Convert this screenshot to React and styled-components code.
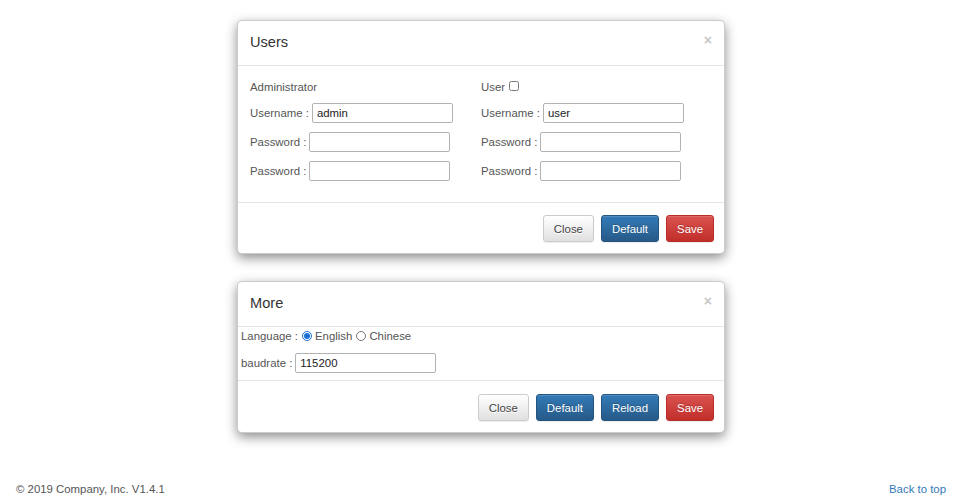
import styled, { createGlobalStyle, css } from 'styled-components';

const GlobalStyle = createGlobalStyle`
  html, body {
    margin: 0;
    padding: 0;
    background: #fff;
  }
  body {
    font-family: "Liberation Sans", Arial, sans-serif;
    font-size: 11.4px;
    line-height: 16px;
    color: #333;
  }
  * {
    box-sizing: border-box;
  }
`;

function Field({ label, value }) {
  return (
    <Row>
      <Label>{label} :</Label>
      <TextInput type="text" defaultValue={value} />
    </Row>
  );
}

function App() {
  return (
    <>
      <GlobalStyle />
      <Stack>
        <Modal>
          <Header>
            <Title>Users</Title>
            <CloseX>×</CloseX>
          </Header>
          <UsersBody>
            <Column>
              <ColHead>Administrator</ColHead>
              <Field label="Username" value="admin" />
              <Field label="Password" value="" />
              <Field label="Password" value="" />
            </Column>
            <Column>
              <ColHead>
                User <CheckBox type="checkbox" />
              </ColHead>
              <Field label="Username" value="user" />
              <Field label="Password" value="" />
              <Field label="Password" value="" />
            </Column>
          </UsersBody>
          <Footer>
            <Button>Close</Button>
            <Button $kind="primary">Default</Button>
            <Button $kind="danger">Save</Button>
          </Footer>
        </Modal>

        <Modal>
          <Header>
            <Title>More</Title>
            <CloseX>×</CloseX>
          </Header>
          <MoreBody>
            <RadioRow>
              <Label>Language :</Label>
              <Radio type="radio" name="lang" defaultChecked />
              <span>English</span>
              <Radio type="radio" name="lang" />
              <span>Chinese</span>
            </RadioRow>
            <Row>
              <Label>baudrate :</Label>
              <TextInput type="text" defaultValue="115200" />
            </Row>
          </MoreBody>
          <Footer $top={13}>
            <Button>Close</Button>
            <Button $kind="primary">Default</Button>
            <Button $kind="primary">Reload</Button>
            <Button $kind="danger">Save</Button>
          </Footer>
        </Modal>
      </Stack>

      <PageFooter>
        <span>© 2019 Company, Inc. V1.4.1</span>
        <a href="#">Back to top</a>
      </PageFooter>
    </>
  );
}
export default App;

const Stack = styled.div`
  display: flex;
  flex-direction: column;
  gap: 27px;
  width: 488px;
  margin-left: calc(50% - 240px);
  padding-top: 20px;
`;

const Modal = styled.div`
  background: #fff;
  border: 1px solid rgba(0, 0, 0, 0.2);
  border-radius: 5px;
  box-shadow: 0 4px 12px rgba(0, 0, 0, 0.45);
`;

const Header = styled.div`
  display: flex;
  justify-content: space-between;
  align-items: center;
  padding: 11px 12px 12px 12px;
  border-bottom: 1px solid #e5e5e5;
`;

const Title = styled.h4`
  margin: 0;
  font-size: 14.6px;
  line-height: 21px;
  font-weight: 400;
  color: #333;
`;

const CloseX = styled.span`
  font-size: 14px;
  font-weight: 700;
  line-height: 1;
  color: #c8c8c8;
  margin-top: -6px;
`;

const UsersBody = styled.div`
  display: grid;
  grid-template-columns: 1fr 1fr;
  padding: 13px 12px 21px;
`;

const Column = styled.div`
  display: flex;
  flex-direction: column;
  gap: 9px;
`;

const ColHead = styled.div`
  display: flex;
  align-items: center;
  gap: 4px;
  height: 16px;
  margin-bottom: -1px;
  color: #555;
`;

const Row = styled.div`
  display: flex;
  align-items: center;
  gap: 3px;
  height: 20px;
`;

const Label = styled.span`
  color: #555;
  white-space: pre;
`;

const TextInput = styled.input`
  width: 141px;
  height: 20px;
  padding: 1px 4px;
  border: 1px solid #b3b3b3;
  border-radius: 2px;
  font-family: "Liberation Sans", Arial, sans-serif;
  font-size: 11.4px;
  color: #222;
  outline: none;
`;

const CheckBox = styled.input`
  width: 10px;
  height: 10px;
  margin: -2px 0 0;
`;

const MoreBody = styled.div`
  display: flex;
  flex-direction: column;
  gap: 9px;
  padding: 1px 4px 7px 3px;
`;

const RadioRow = styled.div`
  display: flex;
  align-items: center;
  gap: 3px;
  height: 16px;
  color: #555;
`;

const Radio = styled.input`
  width: 10px;
  height: 10px;
  margin: 0 0 0 1px;
  accent-color: #1a6fd8;
`;

const Footer = styled.div`
  display: flex;
  justify-content: flex-end;
  gap: 7px;
  padding: ${p => p.$top || 12}px 10px 11px;
  border-top: 1px solid #e5e5e5;
`;

const kinds = {
  default: css`
    color: #444;
    background: linear-gradient(to bottom, #fff 0, #e0e0e0 100%);
    border-color: #ccc;
    text-shadow: 0 1px 0 #fff;
  `,
  primary: css`
    color: #fff;
    background: linear-gradient(to bottom, #337ab7 0, #265a88 100%);
    border-color: #245580;
    text-shadow: 0 -1px 0 rgba(0, 0, 0, 0.2);
  `,
  danger: css`
    color: #fff;
    background: linear-gradient(to bottom, #d9534f 0, #c12e2a 100%);
    border-color: #b92c28;
    text-shadow: 0 -1px 0 rgba(0, 0, 0, 0.2);
  `,
};

const Button = styled.button`
  height: 27px;
  padding: 0 10px;
  border: 1px solid;
  border-radius: 3px;
  font-family: "Liberation Sans", Arial, sans-serif;
  font-size: 11.4px;
  line-height: 16px;
  box-shadow: inset 0 1px 0 rgba(255, 255, 255, 0.15), 0 1px 1px rgba(0, 0, 0, 0.075);
  cursor: pointer;
  ${p => kinds[p.$kind || 'default']}
`;

const PageFooter = styled.footer`
  display: flex;
  justify-content: space-between;
  margin-top: 48px;
  padding: 0 8px 0 16px;
  line-height: 16px;
  color: #555;

  a {
    color: #337ab7;
    text-decoration: none;
  }
`;
